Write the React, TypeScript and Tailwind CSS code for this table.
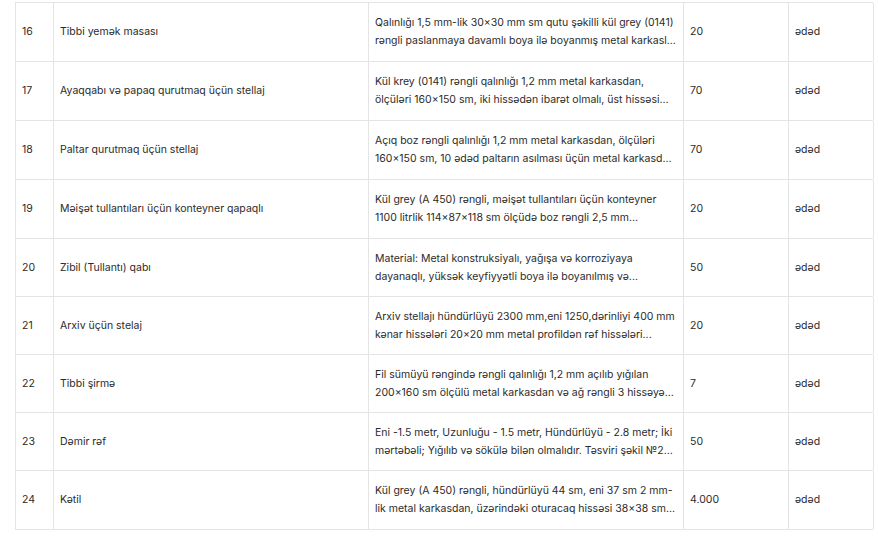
import React from 'react';

type Row = {
  no: number;
  name: string;
  desc: string;
  qty: string;
  unit: string;
  h: string;
};

const rows: Row[] = [
  {
    no: 16,
    name: 'Tibbi yemək masası',
    desc: 'Qalınlığı 1,5 mm-lik 30×30 mm sm qutu şəkilli kül grey (0141) rəngli paslanmaya davamlı boya ilə boyanmış metal karkaslı masa, üstü laminat örtüklü',
    qty: '20',
    unit: 'ədəd',
    h: 'h-[59px]',
  },
  {
    no: 17,
    name: 'Ayaqqabı və papaq qurutmaq üçün stellaj',
    desc: 'Kül krey (0141) rəngli qalınlığı 1,2 mm metal karkasdan, ölçüləri 160×150 sm, iki hissədən ibarət olmalı, üst hissəsi papaq üçün',
    qty: '70',
    unit: 'ədəd',
    h: 'h-[59px]',
  },
  {
    no: 18,
    name: 'Paltar qurutmaq üçün stellaj',
    desc: 'Açıq boz rəngli qalınlığı 1,2 mm metal karkasdan, ölçüləri 160×150 sm, 10 ədəd paltarın asılması üçün metal karkasdan asılqanlı',
    qty: '70',
    unit: 'ədəd',
    h: 'h-[59px]',
  },
  {
    no: 19,
    name: 'Məişət tullantıları üçün konteyner qapaqlı',
    desc: 'Kül grey (A 450) rəngli, məişət tullantıları üçün konteyner 1100 litrlik 114×87×118 sm ölçüdə boz rəngli 2,5 mm qalınlığında metal',
    qty: '20',
    unit: 'ədəd',
    h: 'h-[59px]',
  },
  {
    no: 20,
    name: 'Zibil (Tullantı) qabı',
    desc: 'Material: Metal konstruksiyalı, yağışa və korroziyaya dayanaqlı, yüksək keyfiyyətli boya ilə boyanılmış və...',
    qty: '50',
    unit: 'ədəd',
    h: 'h-[58px]',
  },
  {
    no: 21,
    name: 'Arxiv üçün stelaj',
    desc: 'Arxiv stellajı hündürlüyü 2300 mm,eni 1250,dərinliyi 400 mm kənar hissələri 20×20 mm metal profildən rəf hissələri...',
    qty: '20',
    unit: 'ədəd',
    h: 'h-[58px]',
  },
  {
    no: 22,
    name: 'Tibbi şirmə',
    desc: 'Fil sümüyü rəngində rəngli qalınlığı 1,2 mm açılıb yığılan 200×160 sm ölçülü metal karkasdan və ağ rəngli 3 hissəyə bölünən parçadan',
    qty: '7',
    unit: 'ədəd',
    h: 'h-[58px]',
  },
  {
    no: 23,
    name: 'Dəmir rəf',
    desc: 'Eni -1.5 metr, Uzunluğu - 1.5 metr, Hündürlüyü - 2.8 metr; İki mərtəbəli; Yığılıb və sökülə bilən olmalıdır. Təsviri şəkil №2 əlavə olunur',
    qty: '50',
    unit: 'ədəd',
    h: 'h-[58px]',
  },
  {
    no: 24,
    name: 'Kətil',
    desc: 'Kül grey (A 450) rəngli, hündürlüyü 44 sm, eni 37 sm 2 mm-lik metal karkasdan, üzərindəki oturacaq hissəsi 38×38 sm ölçüdə taxtadan',
    qty: '4.000',
    unit: 'ədəd',
    h: 'h-[59px]',
  },
];

const cell = 'flex items-center px-[6px] border-r border-[#e4e4e4]';

const App = () => {
  return (
    <div className="w-[878px] h-[546px] bg-white overflow-hidden pt-[2px] pl-[15px] font-['Inter',sans-serif] text-[10.5px] leading-[18px] text-[#2b2b2b]">
      <div className="w-[858px] border-t border-l border-[#e4e4e4]">
        {rows.map((r) => (
          <div
            key={r.no}
            className={`grid grid-cols-[38px_315px_315px_105px_85px] border-b border-[#e4e4e4] ${r.h}`}
          >
            <div className={cell}>{r.no}</div>
            <div className={cell}>{r.name}</div>
            <div className={cell}>
              <p className="line-clamp-2">{r.desc}</p>
            </div>
            <div className={cell}>{r.qty}</div>
            <div className={cell}>{r.unit}</div>
          </div>
        ))}
      </div>
    </div>
  );
};

export default App;
